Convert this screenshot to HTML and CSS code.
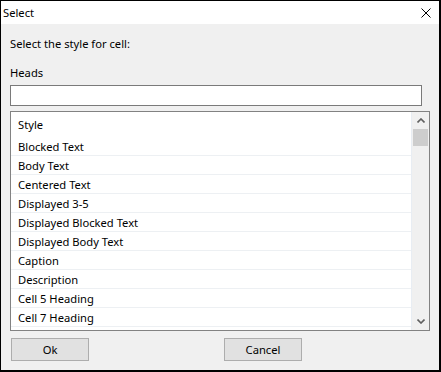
FILE: index.html
```html
<!DOCTYPE html>
<html>
<head>
<meta charset="utf-8">
<link rel="stylesheet" href="styles.css">
</head>
<body>
<div class="window">
  <div class="titlebar">
    <span class="title">Select</span>
    <svg class="close" width="10" height="10" viewBox="0 0 10 10"><path d="M0.5 0.5 L9.5 9.5 M9.5 0.5 L0.5 9.5" stroke="#000" stroke-width="1" fill="none"/></svg>
  </div>
  <div class="content">
    <div class="prompt">Select the style for cell:</div>
    <div class="label">Heads</div>
    <div class="input"></div>
    <div class="listbox">
      <div class="rows">
        <div class="row header">Style</div>
        <div class="row">Blocked Text</div>
        <div class="row">Body Text</div>
        <div class="row">Centered Text</div>
        <div class="row">Displayed 3-5</div>
        <div class="row">Displayed Blocked Text</div>
        <div class="row">Displayed Body Text</div>
        <div class="row">Caption</div>
        <div class="row">Description</div>
        <div class="row">Cell 5 Heading</div>
        <div class="row">Cell 7 Heading</div>
      </div>
      <div class="scrollbar">
        <div class="arrow"><svg width="8" height="5" viewBox="0 0 8 5"><path d="M0.5 4.5 L4 1 L7.5 4.5" stroke="#606060" stroke-width="1.6" fill="none"/></svg></div>
        <div class="track"><div class="thumb"></div></div>
        <div class="arrow"><svg width="8" height="5" viewBox="0 0 8 5"><path d="M0.5 0.5 L4 4 L7.5 0.5" stroke="#606060" stroke-width="1.6" fill="none"/></svg></div>
      </div>
    </div>
    <div class="buttons">
      <div class="button">Ok</div>
      <div class="button">Cancel</div>
    </div>
  </div>
</div>
</body>
</html>
```
FILE: styles.css
```css
html, body {
  margin: 0;
  padding: 0;
}
body {
  width: 441px;
  height: 372px;
  font-family: "Noto Sans", "Open Sans", sans-serif;
  font-size: 11.2px;
  color: #000;
  background: #f0f0f0;
}
.window {
  box-sizing: border-box;
  width: 441px;
  height: 372px;
  border-top: 1px solid #000;
  border-left: 1px solid #000;
  border-right: 2px solid #000;
  border-bottom: 2px solid #000;
  display: flex;
  flex-direction: column;
}
.titlebar {
  height: 23px;
  background: #fff;
  display: flex;
  align-items: center;
  justify-content: space-between;
  padding-left: 2px;
  padding-right: 8px;
  flex-shrink: 0;
}
.title {
  line-height: 16px;
}
.close {
  display: block;
  margin-top: 1px;
}
.content {
  flex: 1;
  background: #f0f0f0;
  padding-left: 9px;
  display: flex;
  flex-direction: column;
  align-items: flex-start;
}
.prompt {
  line-height: 16px;
  margin-top: 12px;
}
.label {
  line-height: 16px;
  margin-top: 13px;
}
.input {
  box-sizing: border-box;
  width: 412px;
  height: 21px;
  margin-top: 4px;
  background: #fff;
  border: 1px solid #7a7a7a;
}
.listbox {
  box-sizing: border-box;
  width: 420px;
  height: 220px;
  margin-top: 5px;
  border: 1px solid #828282;
  background: #fff;
  display: flex;
  overflow: hidden;
}
.rows {
  width: 400px;
  border-right: 1px solid #e8edf3;
  background: #fff;
  overflow: hidden;
}
.row {
  height: 18px;
  line-height: 19px;
  padding-left: 7px;
  border-bottom: 1px solid #edf0f3;
  white-space: nowrap;
}
.row.header {
  height: 25px;
  line-height: 25px;
  border-bottom: none;
}
.scrollbar {
  width: 17px;
  background: #f0f0f0;
  display: flex;
  flex-direction: column;
}
.arrow {
  height: 17px;
  display: flex;
  align-items: center;
  justify-content: center;
  flex-shrink: 0;
}
.arrow svg {
  display: block;
}
.track {
  flex: 1;
  padding: 0 1px;
}
.thumb {
  height: 17px;
  background: #cdcdcd;
}
.buttons {
  display: flex;
  gap: 135px;
  margin-top: 7px;
  margin-left: 1px;
}
.button {
  box-sizing: border-box;
  width: 78px;
  height: 23px;
  background: #e1e1e1;
  border: 1px solid #adadad;
  display: flex;
  align-items: center;
  justify-content: center;
  line-height: 16px;
}
```
